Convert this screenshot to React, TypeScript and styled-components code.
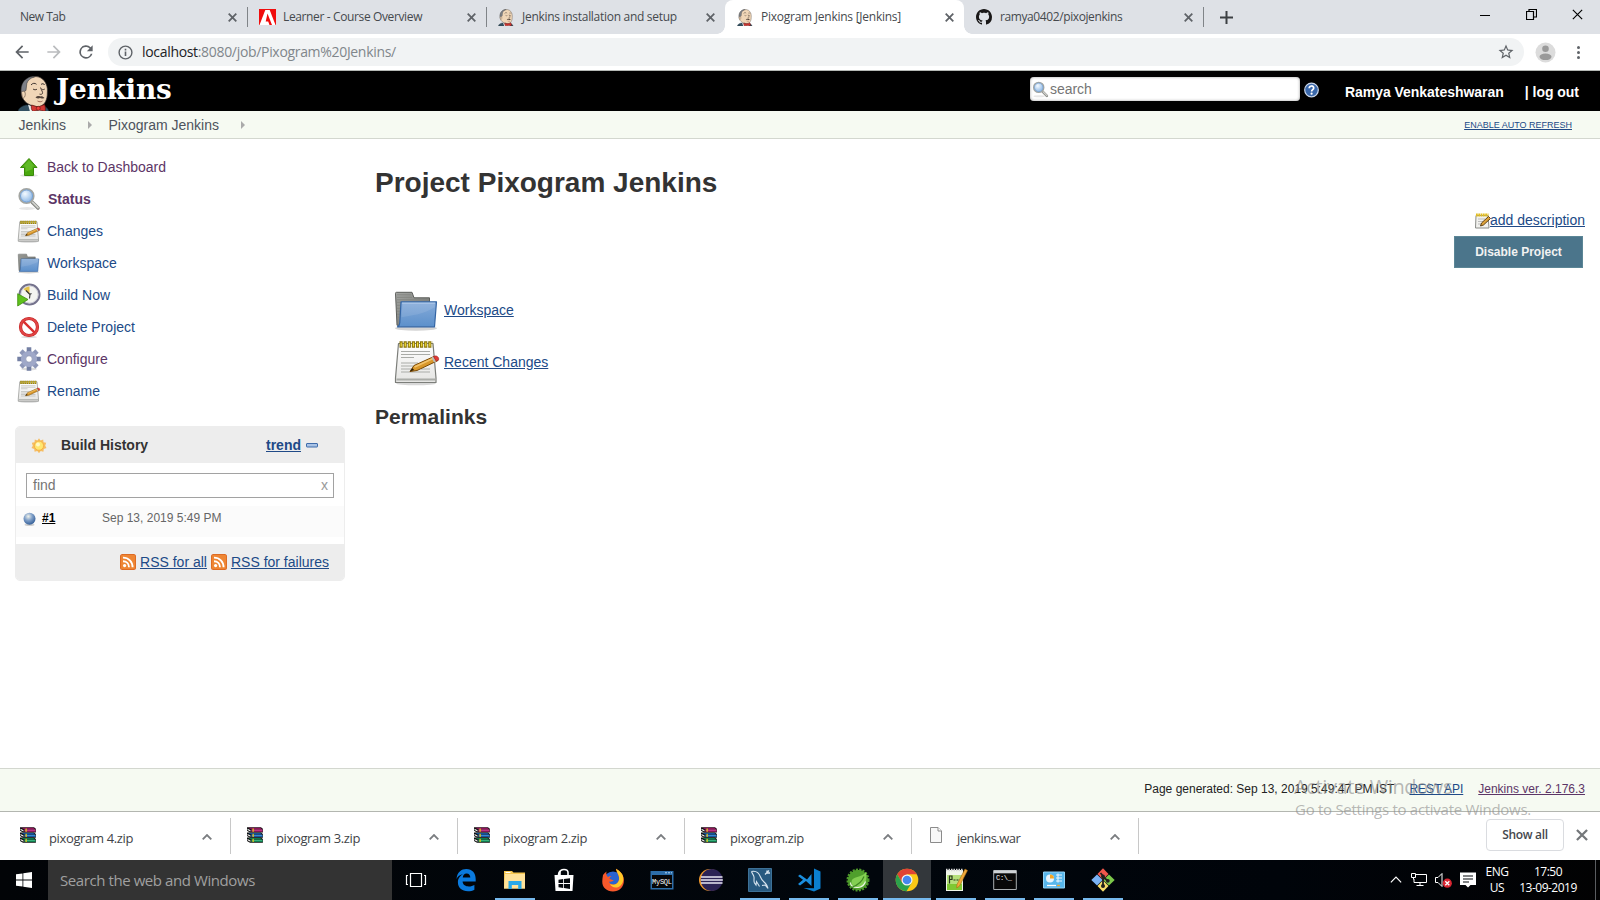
import React from "react";
import styled, { createGlobalStyle, css } from "styled-components";

const ui = `"Open Sans", "Noto Sans", sans-serif`;
const sans = `"Liberation Sans", Arial, sans-serif`;

const Global = createGlobalStyle`
  * { box-sizing: border-box; }
  html, body { margin: 0; padding: 0; }
  body { width: 1600px; height: 900px; overflow: hidden; background: #fff; font-family: ${sans}; }
  svg { display: block; flex: none; }
`;

const Screen = styled.div`
  position: relative;
  display: flex;
  flex-direction: column;
  width: 1600px;
  height: 900px;
  overflow: hidden;
`;

/* ---------- browser chrome ---------- */

const TabStrip = styled.div`
  display: flex;
  height: 34px;
  padding-left: 8px;
  background: #dee1e6;
`;

const Tab = styled.div<{ $active?: boolean; $divider?: boolean }>`
  position: relative;
  display: flex;
  align-items: center;
  width: 239px;
  height: 34px;
  padding: 0 10px 0 12px;
  border-radius: 8px 8px 0 0;
  background: ${(p) => (p.$active ? "#fff" : "transparent")};
  ${(p) =>
    p.$active &&
    css`
      &::before,
      &::after {
        content: "";
        position: absolute;
        bottom: 0;
        width: 8px;
        height: 8px;
      }
      &::before { left: -8px; background: radial-gradient(circle at 0 0, transparent 7.5px, #fff 8px); }
      &::after { right: -8px; background: radial-gradient(circle at 100% 0, transparent 7.5px, #fff 8px); }
    `}
  ${(p) =>
    p.$divider &&
    css`
      &::after {
        content: "";
        position: absolute;
        right: -1px;
        top: 7px;
        width: 1px;
        height: 20px;
        background: #808488;
      }
    `}
`;

const TabIcon = styled.span`
  width: 16px;
  height: 16px;
  margin-right: 8px;
`;

const TabTitle = styled.span<{ $ls: number }>`
  flex: 1;
  font: 12px/16px ${ui};
  letter-spacing: ${(p) => p.$ls}px;
  color: #45494d;
  white-space: nowrap;
`;

const NewTabButton = styled.div`
  display: flex;
  align-items: center;
  padding-left: 17px;
`;

const WindowControls = styled.div`
  display: flex;
  margin-left: auto;
  height: 29px;
`;

const WindowControl = styled.div`
  display: flex;
  align-items: center;
  justify-content: center;
  width: 46px;
`;

const Toolbar = styled.div`
  display: flex;
  align-items: center;
  height: 37px;
  padding: 0 12px;
  border-bottom: 1px solid #b4b8b4;
  background: #fff;
`;

const NavButtons = styled.div`
  display: flex;
  gap: 12px;
  width: 96px;
`;

const AddressBar = styled.div`
  display: flex;
  align-items: center;
  width: 1416px;
  height: 28px;
  padding: 0 9px 0 9px;
  border-radius: 14px;
  background: #f1f3f4;
`;

const Url = styled.span`
  flex: 1;
  margin-left: 8px;
  font: 14px/20px ${ui};
  letter-spacing: -0.32px;
  color: #80868b;
  b { font-weight: 400; color: #202124; }
`;

const ToolbarEnd = styled.div`
  display: flex;
  align-items: center;
  gap: 12px;
  margin-left: 11px;
`;

/* ---------- Jenkins page ---------- */

const Header = styled.header`
  display: flex;
  height: 40px;
  padding: 0 21px 0 18px;
  background: #000;
`;

const Wordmark = styled.span`
  margin-left: 4px;
  font: bold 28px/38px "DejaVu Serif", "Liberation Serif", serif;
  letter-spacing: -0.3px;
  color: #fff;
`;

const SearchBox = styled.div`
  display: flex;
  align-items: center;
  width: 270px;
  height: 24px;
  margin: 6px 4px 0 auto;
  padding-left: 2px;
  border-radius: 4px;
  background: #fff;
  box-shadow: inset 0 0 3px #999;
  font: 14px/20px ${sans};
  color: #757575;
  svg { margin-right: 1px; }
`;

const Help = styled.div`
  padding-top: 11px;
  width: 41px;
`;

const UserLinks = styled.div`
  display: flex;
  padding-top: 11px;
  gap: 21px;
  font: bold 14px/20px ${sans};
  letter-spacing: -0.03px;
  color: #fff;
`;

const Crumbs = styled.nav`
  display: flex;
  align-items: center;
  height: 28px;
  padding: 0 28px 0 18.500px;
  border-bottom: 1px solid #d3d7cf;
  background: #f6faf2;
  font: 14px/20px ${sans};
  color: #4d545d;
`;

const CrumbArrow = styled.span`
  width: 0;
  height: 0;
  margin: 0 16.500px 0 22px;
  border: 4px solid transparent;
  border-left-color: #aaa;
  border-right-width: 0;
`;

const AutoRefresh = styled.a`
  margin-left: auto;
  font-size: 9px;
  line-height: 12px;
  color: #204a87;
  text-decoration: underline;
`;

const Body = styled.div`
  display: flex;
  flex: 1;
  padding: 12px 15px 0;
`;

const Side = styled.aside`
  width: 330px;
  margin-right: 30px;
`;

const Task = styled.div<{ $visited?: boolean; $current?: boolean }>`
  display: flex;
  align-items: center;
  height: 32px;
  padding-left: 2px;
  gap: ${(p) => (p.$current ? 7 : 6)}px;
  font: ${(p) => (p.$current ? "bold " : "")}14px/20px ${sans};
  color: ${(p) => (p.$visited ? "#5c3566" : "#204a87")};
`;

const History = styled.section`
  height: 155px;
  margin-top: 19px;
  border: 1px solid #ededed;
  border-radius: 5px;
  background: #fff;
  overflow: hidden;
`;

const HistoryHead = styled.div`
  display: flex;
  align-items: center;
  height: 36px;
  padding: 0 25px 1px 15px;
  background: #ededed;
  font: bold 14px/20px ${sans};
  color: #333;
  a { margin-left: auto; margin-right: 5px; color: #204a87; text-decoration: underline; }
`;

const HistoryTitle = styled.span`
  margin-left: 14px;
`;

const FindBox = styled.div`
  display: flex;
  justify-content: space-between;
  height: 25px;
  margin: 10px 10px 8px;
  padding: 0 5px 0 6px;
  border: 1px solid #a2a2a2;
  font: 14px/23px ${sans};
  color: #757575;
`;

const ClearFind = styled.span`
  font-size: 14px;
  color: #999;
`;

const BuildRow = styled.div`
  display: flex;
  height: 31px;
  padding: 5px 0 0 6px;
  background: #fbfbfb;
  font: 12px/15px ${sans};
  color: #666;
`;

const BuildNumber = styled.a`
  width: 60px;
  margin-left: 6px;
  font-weight: bold;
  color: #000;
  text-decoration: underline;
`;

const Feeds = styled.div`
  display: flex;
  align-items: center;
  justify-content: flex-end;
  height: 37px;
  margin-top: 7px;
  padding: 0 15px 1px 0;
  background: #ededed;
  font: 14px/20px ${sans};
  a { margin: 0 4px; color: #204a87; text-decoration: underline; }
  a:last-child { margin-right: 0; }
`;

const Main = styled.main`
  flex: 1;
  display: flex;
  flex-direction: column;
  color: #333;
`;

const Title = styled.h1`
  margin: 15px 0 0;
  font: bold 28px/34px ${sans};
`;

const Actions = styled.div`
  display: flex;
  flex-direction: column;
  align-items: flex-end;
  margin-top: 9px;
`;

const AddDescription = styled.a`
  display: flex;
  align-items: center;
  height: 22px;
  font: 14px/20px ${sans};
  color: #204a87;
  text-decoration: underline;
  svg { margin: 2px -1px 0 0; }
`;

const DisableButton = styled.div`
  width: 129px;
  height: 32px;
  margin: 5px 2px 0 0;
  border: 1px solid #5b8696;
  background: #4b758b;
  font: bold 12px/30px ${sans};
  text-align: center;
  color: #f2f2f2;
`;

const BigLink = styled.div`
  display: flex;
  align-items: center;
  height: 52px;
  padding-left: 18px;
  gap: 3px;
  a { font: 14px/20px ${sans}; color: #204a87; text-decoration: underline; }
`;

const BigLinks = styled.div`
  padding-top: 16px;
`;

const SubTitle = styled.h2`
  margin: 15px 0 0;
  font: bold 21px/28px ${sans};
`;

const Footer = styled.footer`
  display: flex;
  justify-content: flex-end;
  gap: 15px;
  height: 43px;
  padding: 12px 15px 0 0;
  border-top: 1px solid #d3d7cf;
  background: #f6faf2;
  font: 12px/16px ${sans};
  color: #222;
`;

const FooterLink = styled.a<{ $visited?: boolean }>`
  color: ${(p) => (p.$visited ? "#5c3566" : "#204a87")};
  text-decoration: underline;
`;

/* ---------- download shelf ---------- */

const Shelf = styled.div`
  display: flex;
  height: 49px;
  border-top: 1px solid #b3b6b0;
  background: #fff;
`;

const Download = styled.div<{ $first?: boolean }>`
  display: flex;
  width: ${(p) => (p.$first ? 231 : 227)}px;
  height: 36px;
  margin-top: 6px;
  padding: 9px 18px 0 ${(p) => (p.$first ? 20 : 16)}px;
  border-right: 1px solid #c8c8c8;
`;

const FileName = styled.span<{ $ls: number }>`
  flex: 1;
  margin: 2px 0 0 13px;
  font: 13px/18px ${ui};
  letter-spacing: ${(p) => p.$ls}px;
  color: #3f4347;
`;

const Caret = styled.span`
  padding-top: 7px;
`;

const ShelfEnd = styled.div`
  display: flex;
  align-items: flex-start;
  margin-left: auto;
  padding: 7px 12px 0 0;
  gap: 12px;
`;

const ShowAll = styled.div`
  width: 78px;
  height: 32px;
  border: 1px solid #dadce0;
  border-radius: 4px;
  font: 600 12px/29px ${ui};
  letter-spacing: -0.35px;
  text-align: center;
  color: #45484d;
`;

const CloseWrap = styled.div`
  padding-top: 10px;
`;

/* ---------- taskbar ---------- */

const TaskBar = styled.div`
  display: flex;
  height: 40px;
  background: linear-gradient(90deg, #020407, #01060c 55%, #00040a 80%, #020203);
`;

const StartButton = styled.div`
  display: flex;
  align-items: center;
  justify-content: center;
  width: 48px;
`;

const TaskSearch = styled.div`
  width: 344px;
  padding-left: 12px;
  background: #333;
  font: 15px/40px ${ui};
  letter-spacing: -0.42px;
  color: #a0a0a0;
`;

const Apps = styled.div`
  display: flex;
  gap: 1px;
`;

const AppButton = styled.div<{ $running?: boolean; $active?: boolean }>`
  display: flex;
  align-items: center;
  justify-content: center;
  width: 48px;
  height: 40px;
  background: ${(p) =>
    p.$active
      ? "linear-gradient(#76b9ed, #76b9ed) bottom / 48px 2px no-repeat #33373b"
      : p.$running
        ? "linear-gradient(#76b9ed, #76b9ed) bottom / 40px 2px no-repeat"
        : "none"};
  &:nth-child(2) { margin-left: 1px; }
`;

const Tray = styled.div`
  display: flex;
  align-items: center;
  margin-left: auto;
  color: #fff;
`;

const TrayIcons = styled.div`
  display: flex;
  align-items: center;
  gap: 8px;
  margin-right: 8px;
  svg:first-child { margin-right: 1px; }
`;

const TrayText = styled.div<{ $w: number }>`
  width: ${(p) => p.$w}px;
  font: 12px/16px ${ui};
  letter-spacing: -0.5px;
  text-align: center;
`;

const ShowDesktop = styled.div`
  width: 5px;
  height: 40px;
  margin-left: 9px;
  border-left: 1px solid #5a5c60;
`;

const Watermark = styled.div`
  position: absolute;
  left: 1295px;
  top: 774px;
  font: 15px/20px ${ui};
  letter-spacing: -0.28px;
  color: rgba(140, 140, 140, 0.62);
  white-space: nowrap;
  pointer-events: none;
`;

const WatermarkTitle = styled.div`
  margin-left: -1px;
  font-size: 20px;
  line-height: 25px;
  letter-spacing: -0.38px;
`;

/* ---------- icons ---------- */

const Cross = ({ s = 9, w = 1.8, c = "#5f6368" }) => (
  <svg width={s} height={s} viewBox="0 0 9 9">
    <path d="M.7.7 8.3 8.3M8.3.7.7 8.3" stroke={c} strokeWidth={w} />
  </svg>
);

const Butler = ({ w = 32, h = 36 }) => (
  <svg width={w} height={h} viewBox="0 0 32 36">
    <path d="M0 36c.4-3 3-5.3 8-6.500l16 .5c4 1 6 3 7 6z" fill="#335061" stroke="#1b2a33" strokeWidth=".6" />
    <path d="M10 29l6 3 8-3v7H12z" fill="#f0f0f0" />
    <path d="M5.500 24C2 19 2.500 11 6.500 6 10 1.500 18-.5 23 2.500c5 3 7 9 6.300 15 .2 6-2.300 12-7.300 13.500-5 .8-13-1.500-16.500-7z" fill="#f0d6b7" stroke="#3a3330" strokeWidth=".7" />
    <path d="M3.800 19C2.300 13 3.500 7 8 3.700c3.500-2.700 7-3 8.500-2.200-3.700.8-6.700 3-7.700 6.500L8 15l-1.500.8L5.500 20z" fill="#7d8087" stroke="#2b2b2b" strokeWidth=".5" />
    <path d="M3.500 17c1.500-2 3.800-1.300 3.800 1.500s-1.500 4.500-2.800 4z" fill="#f0d6b7" stroke="#5b4a3e" strokeWidth=".6" />
    <path d="M13 9.500c1.500-2 4-2.200 5.500-.7M23 9c1.200-1.200 2.800-1 3.700.5" fill="none" stroke="#2a2320" strokeWidth=".9" />
    <path d="M15 13.500c1.300 1 2.800 1 4 .2M23.500 13.500c1.200.8 2.500.7 3.300 0M22.500 12c1 3 2.500 4.500 2 6-.8 1-2 1-3 .6" fill="none" stroke="#3a2e28" strokeWidth=".9" />
    <path d="M17.500 22c1.500-1.700 3.500-1.900 4.700-1.100 1.600-.5 3 .2 4.300 1.500-2 1-3.500.8-4.500.2-1.300.5-3 .5-4.500-.6z" fill="#55463c" />
    <path d="M19.500 25.500c2 1 3.500 1 5 0" fill="none" stroke="#8a4f40" strokeWidth=".8" />
    <path d="M13.500 29.500l6.500 2 6.500-2.500c1 2 1.200 5 .5 7l-6-1.500-6 1.500c-1.800-2-2-4-1.500-6.500z" fill="#d33833" stroke="#5a1512" strokeWidth=".7" />
    <circle cx="20.300" cy="32.800" r="2" fill="#ef3d3a" stroke="#5a1512" strokeWidth=".6" />
  </svg>
);

const Adobe = () => (
  <svg width="17" height="16" viewBox="0 0 17 16">
    <path fill="#f00d0d" d="M0 0h17v16H0z" />
    <path fill="#fff" d="M6.300 1h4.400L16.500 16H.5z" />
    <path fill="#f00d0d" d="M8.500 4.500 13 16h-2.500l-1.300-3.500H6.700z" />
  </svg>
);

const GitHub = () => (
  <svg width="16" height="16" viewBox="0 0 16 16">
    <path fill="#191717" d="M8 0C3.580 0 0 3.580 0 8c0 3.540 2.290 6.530 5.470 7.590.4.070.550-.170.550-.380 0-.190-.010-.820-.010-1.490-2.010.370-2.530-.490-2.690-.940-.090-.230-.480-.940-.820-1.130-.280-.150-.680-.520-.010-.530.630-.010 1.080.580 1.230.820.720 1.210 1.870.870 2.330.660.070-.520.280-.870.510-1.070-1.780-.2-3.640-.890-3.640-3.950 0-.870.310-1.590.820-2.150-.080-.2-.360-1.020.080-2.120 0 0 .670-.210 2.200.820.640-.180 1.320-.270 2-.270s1.360.090 2 .270c1.530-1.040 2.200-.820 2.200-.820.440 1.100.160 1.920.080 2.120.510.560.820 1.270.820 2.150 0 3.070-1.870 3.750-3.650 3.950.290.250.540.730.540 1.480 0 1.070-.010 1.930-.010 2.200 0 .210.150.460.550.380A8.010 8.010 0 0 0 16 8c0-4.420-3.580-8-8-8z" />
  </svg>
);

const NavIcon = ({ d, c = "#5f6368" }: { d: string; c?: string }) => (
  <svg width="20" height="20" viewBox="0 0 24 24">
    <path d={d} fill={c} />
  </svg>
);

const Magnifier = ({ s = 24 }) => (
  <svg width={s} height={s} viewBox="0 0 24 24">
    <defs>
      <radialGradient id="lens" cx=".4" cy=".35"><stop offset="0" stopColor="#f4faff" /><stop offset="1" stopColor="#9fc3ea" /></radialGradient>
    </defs>
    <ellipse cx="10" cy="21.500" rx="8" ry="1.500" fill="#e6e6e6" />
    <path d="M15 15 21 21" stroke="#858782" strokeWidth="3.600" strokeLinecap="round" />
    <path d="M15.500 15.200 21 20.700" stroke="#d0d1cd" strokeWidth="1.800" strokeLinecap="round" />
    <circle cx="9.500" cy="9" r="7.200" fill="url(#lens)" stroke="#a3a5a1" strokeWidth="1.800" />
    <circle cx="9.500" cy="9" r="6" fill="none" stroke="#6f9dd2" strokeWidth=".9" />
  </svg>
);

const UpArrow = () => (
  <svg width="24" height="24" viewBox="0 0 24 24">
    <ellipse cx="12" cy="20.500" rx="9" ry="1.500" fill="#e2e2e2" />
    <path d="M12 3.500 20 12.500H16.500V20.500H7.500V12.500H3.500z" fill="#4aa80e" stroke="#3a8a0a" strokeWidth="1" strokeLinejoin="round" />
    <path d="M12 5 17.500 11.500H15.500V14L8.500 17V11.500H6z" fill="#73c93a" opacity=".55" />
  </svg>
);

const Notepad = ({ s = 24 }) => (
  <svg width={s} height={s} viewBox="0 0 48 48">
    <defs>
      <linearGradient id="paper" x1="0" y1="0" x2="0" y2="1"><stop offset="0" stopColor="#fff" /><stop offset="1" stopColor="#e4e4e2" /></linearGradient>
    </defs>
    <ellipse cx="23" cy="45.500" rx="20" ry="1.800" fill="#d8d8d8" />
    <path d="M5.500 5.500H40L43 40v4.500H2.500V40z" fill="url(#paper)" stroke="#7c7e7a" strokeWidth="1.200" strokeLinejoin="round" />
    <path d="M3.500 41.500h38.500" stroke="#aaaca8" strokeWidth="2" />
    <path d="M8 13.500h29M8 16.500h29M8 19.500h13M8 25h17M8 28h14M8 31h10M8 34h29M28 31h9" stroke="#a9aba7" strokeWidth="1.100" />
    <path d="M6.500 6.500h33" stroke="#8a7408" strokeWidth="6.500" strokeDasharray="3.200 .9" />
    <path d="M7.600 6.500h32" stroke="#f2dc3c" strokeWidth="4" strokeDasharray="1.200 2.900" />
    <path d="M17 33.500l4-6L41 18.500l4 4L24 32.500z" fill="#d9982b" stroke="#7b4a06" strokeWidth="1" strokeLinejoin="round" />
    <path d="M21.500 29 40 20.500" stroke="#f3c36b" strokeWidth="1.600" />
    <path d="M17 33.500l2.200-3.500 2 2z" fill="#2b1d06" />
    <path d="M38.500 19.500l2.500 5 2-1-2.500-5z" fill="#b9bbb8" />
    <path d="M41 18.300c2.500-1.300 5.500 1 4.500 3.700l-2.200 1.200-2.800-4.700z" fill="#e23a35" stroke="#99201c" strokeWidth=".6" />
  </svg>
);

const Folder = ({ s = 24 }) => (
  <svg width={s} height={s} viewBox="0 -1.300 48 48">
    <defs>
      <linearGradient id="fold" x1="0" y1="0" x2="0" y2="1"><stop offset="0" stopColor="#86abd9" /><stop offset="1" stopColor="#5c90cb" /></linearGradient>
      <linearGradient id="back" x1="0" y1="0" x2="1" y2="1"><stop offset="0" stopColor="#a5a7a4" /><stop offset="1" stopColor="#666864" /></linearGradient>
    </defs>
    <ellipse cx="23" cy="41" rx="21" ry="2.500" fill="#d4d4d4" />
    <path d="M2.500 6q0-1 1-1H19l2 5.500h15.500V38H4z" fill="url(#back)" stroke="#5c5e5b" strokeWidth="1" />
    <path d="M4 7.500h14M4 10h15M4 12.500h32M4 15h4M4 18h3M4 21h3M4 24h3M4 27h3M4 30h2" stroke="#83857f" strokeWidth=".9" />
    <path d="M8 14.500H43.500L41.500 39.500H4.500q2-1 2.300-4z" fill="url(#fold)" stroke="#3465a4" strokeWidth="1.200" strokeLinejoin="round" />
    <path d="M9 15.800H42" stroke="#b3cdec" strokeWidth="1" />
    <path d="M8.500 30C20 28 30 27 42 20l-.5-4H9.500z" fill="#fff" opacity=".1" />
  </svg>
);

const BuildNow = () => (
  <svg width="24" height="24" viewBox="0 0 24 24">
    <circle cx="12.500" cy="11.500" r="10" fill="#f4f4f0" stroke="#74728c" strokeWidth="2" />
    <circle cx="12.500" cy="11.500" r="8.600" fill="none" stroke="#c4c4d0" strokeWidth=".8" />
    <path d="M12.500 11.500 6.500 6Q9.500 3.300 12.500 3.500z" fill="#e3c14a" />
    <path d="M9 7.500l4 4-.5 4M12.500 11.500l2-1" stroke="#333" strokeWidth="1.100" fill="none" />
    <path d="M.7 10.700 11 16.500.7 23z" fill="#5fc11c" stroke="#3f8d0d" strokeWidth=".8" />
  </svg>
);

const Prohibit = () => (
  <svg width="24" height="24" viewBox="0 0 24 24">
    <ellipse cx="12" cy="22" rx="8" ry="1.200" fill="#dcdcdc" />
    <circle cx="12" cy="12" r="8.500" fill="#fff" stroke="#c22020" strokeWidth="3.200" />
    <circle cx="12" cy="12" r="8.500" fill="none" stroke="#e04545" strokeWidth="2.200" />
    <path d="M6.300 6.300l11.400 11.400" stroke="#d93030" strokeWidth="2.400" />
  </svg>
);

const Gear = () => (
  <svg width="24" height="24" viewBox="0 0 24 24">
    <ellipse cx="12" cy="22" rx="8" ry="1.500" fill="#dcdcdc" />
    <g stroke="#7480a4" strokeWidth="4.600">
      <path d="M12 .3v23.400M.3 12h23.400" />
      <path d="M4 4l16 16M20 4 4 20" stroke="#8d97b8" />
    </g>
    <circle cx="12" cy="12" r="5.700" fill="#fff" stroke="#9fa8c8" strokeWidth="4.800" />
    <circle cx="12" cy="12" r="3.300" fill="#fff" stroke="#7480a4" strokeWidth=".7" />
  </svg>
);

const Sun = () => (
  <svg width="16" height="16" viewBox="0 -.7 16 16">
    <path d="M8 .5l1.500 2.300L12.200 1.800l.3 2.700 2.700.6L14.200 8l1.300 2.300-2.700.9-.4 2.800-2.700-.8L8 15.500l-1.700-2.300-2.700.8-.4-2.800-2.700-.9L1.800 8 .8 5.100l2.700-.6.3-2.700 2.700 1z" fill="#f6bd62" />
    <circle cx="8" cy="8" r="4.600" fill="#ffe770" stroke="#f2ab40" strokeWidth=".8" />
    <circle cx="7" cy="6.800" r="2" fill="#fff8c8" />
  </svg>
);

const Ball = () => (
  <svg width="14" height="16" viewBox="0 0 14 16">
    <defs>
      <radialGradient id="ball" cx=".4" cy=".3" r=".75"><stop offset="0" stopColor="#f0f2ea" /><stop offset=".45" stopColor="#7f9fc8" /><stop offset="1" stopColor="#2c5792" /></radialGradient>
    </defs>
    <ellipse cx="7.500" cy="13.800" rx="5" ry="1.300" fill="#cfcfcf" />
    <circle cx="7.500" cy="7.800" r="6" fill="url(#ball)" />
  </svg>
);

const Rss = () => (
  <svg width="16" height="16" viewBox="0 0 16 16">
    <rect width="16" height="16" rx="2.500" fill="#d9621e" />
    <rect x=".7" y=".7" width="14.600" height="14.600" rx="2" fill="#ee8634" />
    <circle cx="4.600" cy="11.600" r="1.600" fill="#fff" />
    <path d="M3 7.200c3.500 0 6 2.500 6 6M3 3.600c5.500 0 9.600 4 9.600 9.600" fill="none" stroke="#fff" strokeWidth="1.900" />
  </svg>
);

const EditNote = () => (
  <svg width="16" height="16" viewBox="0 0 16 16">
    <path d="M1 2.500h12l1 12.500H.5z" fill="#f1f1ee" stroke="#8a8c88" />
    <path d="M1 2h12.500" stroke="#e2bd22" strokeWidth="3" strokeDasharray="1.800 .5" />
    <path d="M3 6h7M3 8.500h5M3 11h3" stroke="#bbb" />
    <path d="M5.500 13l1-3L13.500 3.500l2 2L8.500 12z" fill="#dda23a" stroke="#54360a" strokeWidth=".9" />
  </svg>
);

const HelpIcon = () => (
  <svg width="15" height="16" viewBox="0 0 15 16">
    <circle cx="7.500" cy="8" r="6.800" fill="#3a68ab" stroke="#c9d6ea" strokeWidth="1.200" />
    <path d="M5.200 6.300C5.300 3.200 9.800 3.300 9.700 6c0 1.700-2.100 1.700-2.100 3.500" fill="none" stroke="#fff" strokeWidth="1.700" />
    <circle cx="7.600" cy="11.700" r="1.100" fill="#fff" />
  </svg>
);

const Rar = () => (
  <svg width="16" height="16" viewBox="0 0 16 16">
    {[["#8e1257", "#c93c90", 0], ["#12549a", "#3b86d2", 5.300], ["#0d7a4a", "#36b07c", 10.300]].map(([a, b, y]) => (
      <g key={String(y)} transform={`translate(0 ${y})`}>
        <path d="M0 .3h14l1.900 1.500v3.700H3L0 3.700z" fill="#111" />
        <path d="M1.500.8h12l1.500 1.400H4z" fill={String(a)} />
        <path d="M4.500 2.400h11v2.100h-11z" fill={String(b)} />
        <path d="M4.500 3.800h11v.9h-11z" fill={String(a)} />
        <path d="M.5 1.700l3 1.500v1.300L.5 3z" fill="#f4f4f4" />
        <path d="M5.500 1.500h1.300v3.200H5.500z" fill="#e6c619" />
      </g>
    ))}
  </svg>
);

const FileIcon = () => (
  <svg width="16" height="16" viewBox="0 0 16 16">
    <path d="M2.500.5h7.500L13.500 4v11.500h-11z" fill="#f8f8f8" stroke="#8b8b8b" />
    <path d="M10 .5V4h3.500" fill="#fff" stroke="#8b8b8b" />
  </svg>
);

const Chevron = ({ w = 10, c = "#7a7d80", sw = 1.800 }) => (
  <svg width={w} height={w * 0.6} viewBox="0 0 10 6">
    <path d="M.7 5.300 5 1l4.300 4.300" fill="none" stroke={c} strokeWidth={sw} />
  </svg>
);

const I = ({ children }: { children: React.ReactNode }) => (
  <svg width="24" height="24" viewBox="0 0 24 24">{children}</svg>
);

const Dots = styled.div`
  display: flex;
  flex-direction: column;
  gap: 2px;
  width: 20px;
  align-items: center;
  i { width: 3px; height: 3px; border-radius: 50%; background: #5f6368; }
`;

const MiniText = styled.text`
  font: 7px "Liberation Mono", monospace;
  fill: #fff;
`;

/* ---------- data ---------- */

const tabs = [
  { title: "New Tab", ls: -0.5, icon: null },
  { title: "Learner - Course Overview", ls: -0.37, icon: <Adobe />, divider: true },
  { title: "Jenkins installation and setup", ls: -0.29, icon: <Butler w={16} h={17} /> },
  { title: "Pixogram Jenkins [Jenkins]", ls: -0.25, icon: <Butler w={16} h={17} />, active: true },
  { title: "ramya0402/pixojenkins", ls: -0.4, icon: <GitHub />, divider: true },
];

const tasks = [
  { label: "Back to Dashboard", icon: <UpArrow />, visited: true },
  { label: "Status", icon: <Magnifier />, visited: true, current: true },
  { label: "Changes", icon: <Notepad /> },
  { label: "Workspace", icon: <Folder /> },
  { label: "Build Now", icon: <BuildNow /> },
  { label: "Delete Project", icon: <Prohibit /> },
  { label: "Configure", icon: <Gear />, visited: true },
  { label: "Rename", icon: <Notepad /> },
];

const downloads = [
  { name: "pixogram 4.zip", ls: -0.36 },
  { name: "pixogram 3.zip", ls: -0.36 },
  { name: "pixogram 2.zip", ls: -0.36 },
  { name: "pixogram.zip", ls: -0.36 },
  { name: "jenkins.war", ls: -0.5 },
];

const apps: { id: string; run?: boolean; active?: boolean; icon: React.ReactNode }[] = [
  { id: "taskview", icon: <I><path d="M6.500 5.500h11v13h-11z M4 7.500H2.500v9H4M20 7.500h1.500v9H20" fill="none" stroke="#fff" strokeWidth="1.200" /></I> },
  { id: "edge", icon: <I><path d="M2.500 11C3 4 7.500.9 12.300.9c6 0 9.400 4.300 9.400 10v2.700H8.600c.2 3.600 3.300 4.900 6.200 4.900 2.200 0 4-.6 5.600-1.500v4.700c-1.800 1-4 1.500-6.500 1.500-6 0-10-3.300-10-8.900 0-4 2.400-7 5.600-8.300C5.800 6.600 3.600 8.500 2.500 11zM8.800 9.600h7.500c0-2.300-1.200-4-3.700-4S9 7.300 8.800 9.600z" fill="#0a7ade" /></I> },
  { id: "explorer", run: true, icon: <I><path d="M1 3h8l1.500 1.500H22v16H1z" fill="#f5c64f" /><path d="M2 6h20v14.500H1z" fill="#ffe29a" /><path d="M5.500 21v-8h13v8h-3.300v-4h-6.400v4z" fill="#28a8e8" /><path d="M2.500 4h5v1h-5z" fill="#fff" /></I> },
  { id: "store", icon: <I><path d="M2.500 7h19l-1 16h-17z" fill="#fff" /><path d="M8 9V4.500c0-4 8-4 8 0V9M6.500 7c0-3 2-5 4-5" fill="none" stroke="#fff" strokeWidth="1.600" /><path d="M6.500 11.800l4.700-.7v4H6.500zM12 11l6-.8v4.900h-6zM6.500 16h4.700v4l-4.700-.7zM12 16h6v5l-6-.9z" fill="#06090d" /></I> },
  { id: "firefox", icon: <I><circle cx="12" cy="13" r="9.500" fill="#2a63d0" /><path d="M2 7C1 13 .5 17 4 20.500c4 4 11.500 4 15.500.3 4.500-4.300 4-11 1.500-14.800C19 3.500 17 2 15 .8c.5 2 1 3.500 2 5.200 2 4 1.300 8.500-2 10-3 1.300-6.500 0-7-2.500 2 .7 3.500 0 5-1.200C11 12.500 10.500 11 8.500 11c.3-1.700 1-2.300 2-3-1.700-.2-2.500.3-3.500 1C5.500 8 5 6 5.500 3.500 4 4.500 2.800 5.700 2 7z" fill="#f7582b" /><path d="M15 .8c.5 2 1 3.500 2 5.200 2 4 1.300 8.500-2 10-2 1-4.500.7-6 0 1 3 5 4.500 8.500 3 5-2.500 6-8.500 3.500-13C19 3.500 17 2 15 .8z" fill="#ffc928" /></I> },
  { id: "mysql", icon: <I><path d="M.5 3h23v18.500H.5z" fill="#2d6da8" /><path d="M2 7h20v13H2z" fill="#050608" /><path d="M15 4.800h2M18 4.800h2M21 4.800h1" stroke="#b9d8f2" /><MiniText x="2" y="15.500" textLength="20">MySQL</MiniText></I> },
  { id: "eclipse", icon: <I><circle cx="11" cy="12" r="11" fill="#f29a2e" /><circle cx="12.700" cy="12" r="11" fill="#2c2255" /><path d="M2 9h21.500M1.800 12h22M2 15h21.500" stroke="#e8e6f2" strokeWidth="1.500" /></I> },
  { id: "workbench", run: true, icon: <I><path d="M.5.5h23v23H.5z" fill="#285a80" stroke="#3d7197" /><path d="M3.500 3.500C8 2.500 11 5 12.500 9c1 3 3 4.500 5 6.500 1.500 1.500 2 3 2.500 5l-3-3.500-3 .5M3.500 3.500c.5 2 2 3 2.500 5.500.3 2-.5 4 .5 6l1.500 2 .5-3.500 3 5" fill="none" stroke="#d7e4ee" strokeWidth="1.100" /><path d="M17 6.500l4-4M19 2.500v2.500h3" fill="none" stroke="#d7e4ee" strokeWidth="1.300" /></I> },
  { id: "vscode", run: true, icon: <I><path d="M17 .5l6.500 3v17l-6.500 3L6.500 20l10.500 .3z" fill="#0b7fcf" /><path d="M1 7.500l2-1.300 13.500 9.800V5.500L3 17.300 1 16l13-12 3-1v16.500L1 7.500z" fill="none" /><path d="M1 8l2-1.500 7 5L14.500 6v12L9 13 3 17.500 1 16l5-4.200z" fill="#1a8ede" /></I> },
  { id: "spring", run: true, icon: <I><circle cx="12" cy="12" r="10" fill="#69b13c" stroke="#4f9a2b" strokeWidth="3" strokeDasharray="2 1.200" /><circle cx="12" cy="12" r="10" fill="#4f9f2c" /><path d="M20 4c1.500 9-1 14.500-8 15-4 0-6.500-2-6.500-5C5.500 8 16 10 20 4z" fill="#83cf52" /><path d="M4.500 14.500c-.3 3 3 5.500 7.500 5 4-.5 6.500-2.500 7.500-6" stroke="#eef8e6" fill="none" strokeWidth="1.100" /><path d="M5.500 19.500C11 17.500 16 14 18 8.500" stroke="#3f8722" fill="none" strokeWidth="1.200" /></I> },
  { id: "chrome", run: true, active: true, icon: <I><circle cx="12" cy="12" r="11.300" fill="#fbc916" /><path d="M12 6.300h9.800a11.300 11.300 0 0 0-19.600 0L7.200 15z" fill="#e04335" /><path d="M2.200 6.300A11.300 11.300 0 0 0 11.500 23.300l5.300-8.800-9.600.3z" fill="#2ca24c" /><circle cx="12" cy="12" r="5.500" fill="#f4f4f4" /><circle cx="12" cy="12" r="4.300" fill="#4587f0" /></I> },
  { id: "notepadpp", run: true, icon: <I><path d="M2 2h17v21H2z" fill="#f1f6ea" /><path d="M3 7h15v15H3z" fill="#b5e07a" /><path d="M3 16h15v6H3z" fill="#7fc832" /><path d="M2 2h17" stroke="#d6d6d6" strokeWidth="2.500" strokeDasharray="1.500 1" /><path d="M5.500 7.500v8M5.500 8h2.500v3.500H5.500M9.500 12h2M12.500 12h2" fill="none" stroke="#26331a" strokeWidth="1.200" /><path d="M21 1l2.500 1.500L15.500 18l-2.800 2 .3-3.500z" fill="#f0a93a" stroke="#a86b12" strokeWidth=".6" /></I> },
  { id: "cmd", run: true, icon: <I><path d="M.7 2.500h22.600v19H.7z" fill="#080808" stroke="#a9adb0" /><path d="M.7 2.500h22.600v2.800H.7z" fill="#cfd3d6" /><MiniText x="3" y="11.500" textLength="16">C:\_</MiniText></I> },
  { id: "control", run: true, icon: <I><path d="M1.500 4h21v16h-21z" fill="#58b7ec" stroke="#93d3f6" /><circle cx="8" cy="10.500" r="4" fill="#e9f5fc" /><path d="M8 10.500V6.500a4 4 0 0 1 4 4z" fill="#f5a623" /><path d="M14 7h6M14 10h6M14 13h6M16 5.500v9" stroke="#eaf6fd" strokeWidth="1.100" /><path d="M5 17.500h9" stroke="#fff" strokeWidth="1.300" /><path d="M15 17.500h3" stroke="#f5a623" strokeWidth="1.300" /></I> },
  { id: "git", run: true, icon: <I><path d="M12 .3 17.500 6 12 11.700 6.500 6z" fill="#f0574b" /><path d="M18 6.500 23.700 12 18 17.500 12.300 12z" fill="#7bc74a" /><path d="M6 6.500 11.700 12 6 17.500.3 12z" fill="#7ab2f5" /><path d="M12 12.300 17.500 18 12 23.700 6.500 18z" fill="#f8dd6c" /><path d="M9.500 5l2.500 3v10M12 9l4.500 3.500" stroke="#211f1e" strokeWidth="1.800" fill="none" /><circle cx="12" cy="18" r="2" fill="#211f1e" /><circle cx="12" cy="8.500" r="1.900" fill="#211f1e" /><circle cx="16.800" cy="12.800" r="1.900" fill="#211f1e" /></I> },
];

export default function App() {
  return (
    <Screen>
      <Global />
      <TabStrip>
        {tabs.map((t, i) => (
          <Tab key={i} $active={t.active} $divider={t.divider || i === 0}>
            {t.icon && <TabIcon>{t.icon}</TabIcon>}
            <TabTitle $ls={t.ls}>{t.title}</TabTitle>
            <Cross />
          </Tab>
        ))}
        <NewTabButton>
          <svg width="13" height="13" viewBox="0 0 13 13"><path d="M6.500 0v13M0 6.500h13" stroke="#3c4043" strokeWidth="2" /></svg>
        </NewTabButton>
        <WindowControls>
          <WindowControl><svg width="10" height="10"><path d="M0 5.500h10" stroke="#000" /></svg></WindowControl>
          <WindowControl><svg width="11" height="11"><path d="M.5 2.500h7v8h-7zM3 2.500V.5h7.500v7.500H8" fill="none" stroke="#000" strokeWidth="1.200" /></svg></WindowControl>
          <WindowControl><Cross s={11} w={0.95} c="#000" /></WindowControl>
        </WindowControls>
      </TabStrip>

      <Toolbar>
        <NavButtons>
          <NavIcon d="M20 11H7.800l5.600-5.600L12 4l-8 8 8 8 1.400-1.400L7.800 13H20z" />
          <NavIcon c="#babcbe" d="M12 4l-1.400 1.400 5.600 5.600H4v2h12.200l-5.600 5.600L12 20l8-8z" />
          <NavIcon d="M17.650 6.350A8 8 0 1 0 19.730 14h-2.080A6 6 0 1 1 12 6c1.660 0 3.140.69 4.220 1.780L13 11h7V4z" />
        </NavButtons>
        <AddressBar>
          <svg width="17" height="17" viewBox="0 0 17 17">
            <circle cx="8.500" cy="8.500" r="6.400" fill="none" stroke="#5f6368" strokeWidth="1.400" />
            <path d="M8.500 7.500v4.500M8.500 4.700v1.700" stroke="#5f6368" strokeWidth="1.600" />
          </svg>
          <Url><b>localhost</b>:8080/job/Pixogram%20Jenkins/</Url>
          <svg width="18" height="18" viewBox="0 0 24 24">
            <path d="M22 9.240l-7.190-.62L12 2 9.190 8.630 2 9.240l5.460 4.730L5.820 21 12 17.270 18.180 21l-1.630-7.030zM12 15.400l-3.760 2.270 1-4.280-3.320-2.880 4.380-.38L12 6.100l1.710 4.040 4.380.38-3.320 2.880 1 4.280z" fill="#5f6368" />
          </svg>
        </AddressBar>
        <ToolbarEnd>
          <svg width="21" height="21" viewBox="0 0 21 21">
            <circle cx="10.500" cy="10.500" r="10" fill="#dcdcdc" />
            <circle cx="10.500" cy="6.800" r="3.300" fill="#9a9a9a" />
            <ellipse cx="10.500" cy="14.800" rx="6" ry="3.300" fill="#9a9a9a" />
          </svg>
          <Dots><i /><i /><i /></Dots>
        </ToolbarEnd>
      </Toolbar>

      <Header>
        <svg width="34" height="40" viewBox="0 0 34 40"><g transform="translate(0 4.500)"><Butler w={32} h={36} /></g></svg>
        <Wordmark>Jenkins</Wordmark>
        <SearchBox><Magnifier s={17} />search</SearchBox>
        <Help><HelpIcon /></Help>
        <UserLinks><span>Ramya Venkateshwaran</span><span>| log out</span></UserLinks>
      </Header>

      <Crumbs>
        <span>Jenkins</span><CrumbArrow />
        <span>Pixogram Jenkins</span><CrumbArrow />
        <AutoRefresh>ENABLE AUTO REFRESH</AutoRefresh>
      </Crumbs>

      <Body>
        <Side>
          {tasks.map((t) => (
            <Task key={t.label} $visited={t.visited} $current={t.current}>{t.icon}<span>{t.label}</span></Task>
          ))}
          <History>
            <HistoryHead>
              <Sun /><HistoryTitle>Build History</HistoryTitle>
              <a>trend</a>
              <svg width="13" height="6"><rect x=".5" y="1.500" width="11" height="3.500" rx=".5" fill="#a9c3e6" stroke="#3f6cab" /></svg>
            </HistoryHead>
            <FindBox><span>find</span><ClearFind>x</ClearFind></FindBox>
            <BuildRow><Ball /><BuildNumber>#1</BuildNumber><span>Sep 13, 2019 5:49 PM</span></BuildRow>
            <Feeds><Rss /><a>RSS for all</a><Rss /><a>RSS for failures</a></Feeds>
          </History>
        </Side>
        <Main>
          <Title>Project Pixogram Jenkins</Title>
          <Actions>
            <AddDescription><EditNote />add description</AddDescription>
            <DisableButton>Disable Project</DisableButton>
          </Actions>
          <BigLinks>
            <BigLink><Folder s={48} /><a>Workspace</a></BigLink>
            <BigLink><Notepad s={48} /><a>Recent Changes</a></BigLink>
          </BigLinks>
          <SubTitle>Permalinks</SubTitle>
        </Main>
      </Body>

      <Footer>
        <span>Page generated: Sep 13, 2019 5:49:47 PM IST</span>
        <FooterLink>REST API</FooterLink>
        <FooterLink $visited>Jenkins ver. 2.176.3</FooterLink>
      </Footer>

      <Shelf>
        {downloads.map((d, i) => (
          <Download key={d.name} $first={i === 0}>
            {d.name.endsWith("zip") ? <Rar /> : <FileIcon />}
            <FileName $ls={d.ls}>{d.name}</FileName>
            <Caret><Chevron /></Caret>
          </Download>
        ))}
        <ShelfEnd>
          <ShowAll>Show all</ShowAll>
          <CloseWrap><Cross s={12} w={1.7} c="#74777a" /></CloseWrap>
        </ShelfEnd>
      </Shelf>

      <TaskBar>
        <StartButton>
          <svg width="16" height="16" viewBox="0 0 16 16"><path d="M0 2.300 6.500 1.400V7.600H0zM7.300 1.200 16 0v7.600H7.300zM0 8.400h6.500v6.200L0 13.700zM7.300 8.400H16V16l-8.700-1.200z" fill="#fff" /></svg>
        </StartButton>
        <TaskSearch>Search the web and Windows</TaskSearch>
        <Apps>
          {apps.map((a) => (
            <AppButton key={a.id} $running={a.run} $active={a.active}>{a.icon}</AppButton>
          ))}
        </Apps>
        <Tray>
          <TrayIcons>
            <Chevron w={12} c="#fff" sw={1} />
            <svg width="16" height="14" viewBox="0 0 16 14"><path d="M5 1.500h10.500v8H3V6M9 9.500v3M5.500 12.500h7" fill="none" stroke="#fff" /><path d="M.5.500h4v4h-4zM2.500 4.500v2" fill="none" stroke="#fff" /></svg>
            <svg width="17" height="16" viewBox="0 0 17 16"><path d="M.5 5.500h2.500l4-4v13l-4-4H.5z" fill="none" stroke="#fff" /><circle cx="12.300" cy="11.200" r="4.600" fill="#d92632" /><path d="M10.300 9.200l4 4M14.300 9.200l-4 4" stroke="#fff" strokeWidth="1.300" /></svg>
            <svg width="16" height="16" viewBox="0 0 16 16"><path d="M0 .5h16v12.500h-5.500L8 15.500 5.500 13H0z" fill="#fff" /><path d="M3 4h10M3 7h10M3 10h6" stroke="#05080c" strokeWidth="1.100" /></svg>
          </TrayIcons>
          <TrayText $w={26}>ENG<br />US</TrayText>
          <TrayText $w={76}>17:50<br />13-09-2019</TrayText>
          <ShowDesktop />
        </Tray>
      </TaskBar>

      <Watermark>
        <WatermarkTitle>Activate Windows</WatermarkTitle>
        Go to Settings to activate Windows.
      </Watermark>
    </Screen>
  );
}
